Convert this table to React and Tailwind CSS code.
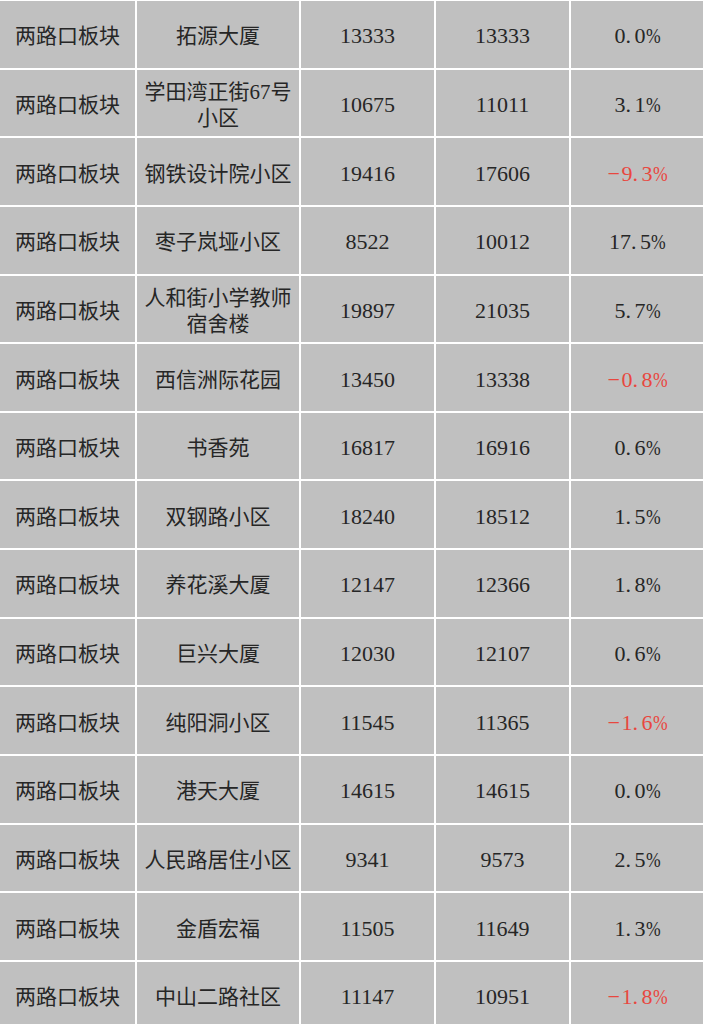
import React from "react";

const rows = [
  ["拓源大厦", "13333", "13333", "0.0%"],
  [["学田湾正街67号", "小区"], "10675", "11011", "3.1%"],
  ["钢铁设计院小区", "19416", "17606", "-9.3%"],
  ["枣子岚垭小区", "8522", "10012", "17.5%"],
  [["人和街小学教师", "宿舍楼"], "19897", "21035", "5.7%"],
  ["西信洲际花园", "13450", "13338", "-0.8%"],
  ["书香苑", "16817", "16916", "0.6%"],
  ["双钢路小区", "18240", "18512", "1.5%"],
  ["养花溪大厦", "12147", "12366", "1.8%"],
  ["巨兴大厦", "12030", "12107", "0.6%"],
  ["纯阳洞小区", "11545", "11365", "-1.6%"],
  ["港天大厦", "14615", "14615", "0.0%"],
  ["人民路居住小区", "9341", "9573", "2.5%"],
  ["金盾宏福", "11505", "11649", "1.3%"],
  ["中山二路社区", "11147", "10951", "-1.8%"],
];

const font = {
  fontFamily: '"Liberation Serif", "Noto Sans CJK SC", serif',
};

function Cell({ children, red, num }) {
  return (
    <div
      className={`bg-[#c0c0c0] h-[66.65px] flex items-center justify-center text-center leading-[26px] pt-[4px] ${
        num ? "text-[22px]" : "text-[21px]"
      } ${red ? "text-[#e8473f]" : "text-[#262626]"}`}
    >
      {children}
    </div>
  );
}

function Pct({ v }) {
  const neg = v.startsWith("-");
  const [a, b] = v.replace("%", "").replace("-", "").split(".");
  return (
    <span className="inline-flex items-baseline">
      {neg && <span className="inline-block w-[14px] text-left">−</span>}
      <span>{a}</span>
      <span className="inline-block w-[9px] text-left">.</span>
      <span>{b}</span>
      <span className="inline-block scale-x-[0.8] origin-left w-[14px] text-left">%</span>
    </span>
  );
}

export default function App() {
  return (
    <div className="w-[706px] h-[1024px] overflow-hidden bg-white" style={font}>
      <div className="grid grid-cols-[135px_162px_133px_133px_132px] gap-[2px] pt-[1px] w-[703px]">
        {rows.map((r, i) => (
          <React.Fragment key={i}>
            <Cell>两路口板块</Cell>
            <Cell>
              {Array.isArray(r[0]) ? (
                <div className="flex flex-col items-center">
                  <span>{r[0][0]}</span>
                  <span>{r[0][1]}</span>
                </div>
              ) : (
                r[0]
              )}
            </Cell>
            <Cell num>{r[1]}</Cell>
            <Cell num>{r[2]}</Cell>
            <Cell num red={r[3].startsWith("-")}>
              <Pct v={r[3]} />
            </Cell>
          </React.Fragment>
        ))}
      </div>
    </div>
  );
}
